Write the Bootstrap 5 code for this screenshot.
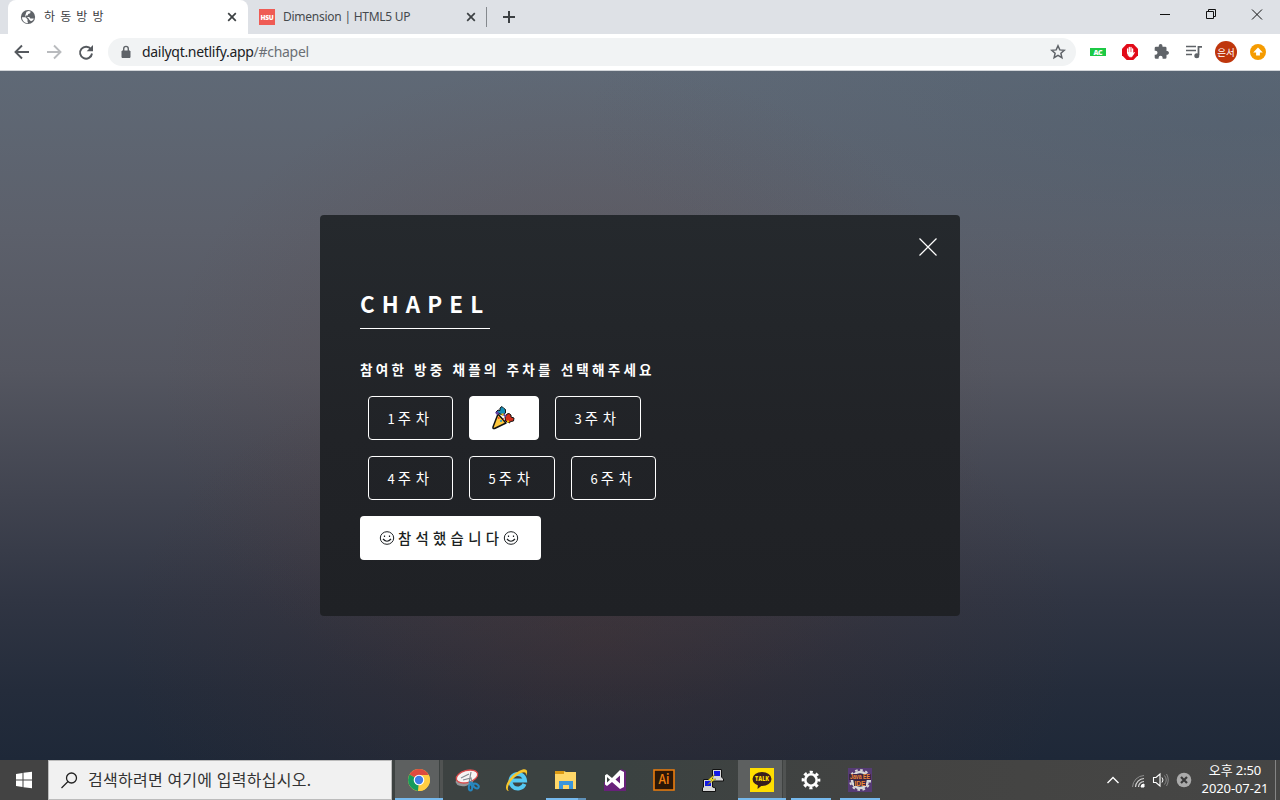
<!DOCTYPE html>
<html lang="ko">
<head>
<meta charset="utf-8">
<meta name="viewport" content="width=device-width, initial-scale=1">
<title>하동방방</title>
<link href="https://cdn.jsdelivr.net/npm/bootstrap@5.3.0/dist/css/bootstrap.min.css" rel="stylesheet">
<style>
body{width:1280px;height:800px;overflow:hidden;font-family:"Noto Sans","Noto Sans CJK KR",sans-serif;font-size:12px;line-height:1.5}
svg{display:block;flex:none}
.tabstrip{height:34px;background:#dee1e6;padding-left:8px}
.tab-on{width:240px;height:34px;background:#fff;border-radius:8px 8px 0 0;padding-left:12px;color:#3c4043}
.tab-off{width:238px;height:34px;padding-left:11px;color:#45494d;letter-spacing:-.25px}
.tab-name{line-height:34px;white-space:pre}
.tab-on .tab-name{letter-spacing:1px}
.tab-name,.url{margin-left:8px}
.tab-x{margin-right:11px}
.toolbar{height:37px;background:#fff;border-bottom:1px solid #d2d5d9;padding-left:12px}
.omni{width:968px;height:28px;border-radius:14px;background:#f1f3f4;margin-left:12px;padding-left:12px;padding-right:10px}
.url{font-size:14px;line-height:20px;padding-bottom:1px;color:#202124;letter-spacing:-.3px}
.url span{color:#6b6f74}
.stage{height:689px;background:
 radial-gradient(ellipse 480px 300px at 600px 570px,rgba(80,50,45,.32),rgba(80,50,45,0)),
 radial-gradient(ellipse 420px 330px at 580px 320px,rgba(95,65,60,.30),rgba(95,65,60,0)),
 radial-gradient(ellipse 650px 210px at 1230px 50px,rgba(70,90,108,.34),rgba(70,90,108,0)),
 linear-gradient(180deg,#5f6976 0,#5c606b 160px,#545660 300px,#40434f 430px,#303543 530px,#242c3b 620px,#1e2838 689px);
 padding-top:144px}
.panel{width:640px;height:401px;border-radius:4px;background:linear-gradient(180deg,#25292d,#212327 55%,#1f2125);color:#fff;padding:72px 40px 0;font-family:"Noto Sans CJK KR",sans-serif}
.panel .close-x{position:absolute;right:23px;top:23px}
.title{width:130px;height:42px;border-bottom:1px solid #fff;font-size:22.4px;font-weight:600;letter-spacing:7.1px;line-height:32px;white-space:nowrap;margin-bottom:30px}
.ask{font-size:13.6px;font-weight:700;letter-spacing:3.19px;line-height:21px;height:37px;margin:0;white-space:nowrap}
.wk{height:44px;width:85px;padding:0 0 0 18.5px;border:1px solid #fff;border-radius:4px;color:#fff;font-size:14.4px;font-weight:400;letter-spacing:4.9px;line-height:38px;text-align:left;white-space:nowrap;background:none}
.wk b{font-weight:400;font-size:13px;letter-spacing:3px}
.wk.w86{width:86px}
.wk.sel{width:70px;background:#fff;padding-left:21px}
.send{height:44px;width:181px;padding:0 0 0 19px;border:0;border-radius:4px;background:#fff;color:#1b1f22;font-family:inherit;font-size:14.4px;font-weight:500;letter-spacing:4.3px;line-height:42px;white-space:nowrap}
.send span{margin-left:3px;padding-bottom:1px}
.taskbar{height:40px;background:linear-gradient(90deg,#434343 0,#434343 48px,#3d4241 400px,#3a4241 600px,#434342 900px,#464645 1280px)}
.search{width:344px;height:40px;background:#f1f1f1;border:1px solid #bcbcbc;padding-left:12px;margin-right:2px;color:#333;font-size:16px;letter-spacing:.27px}
.search span{margin-left:10px;line-height:36px}
.app{width:49px;height:40px;position:relative;padding-bottom:1px}
.app.open{background:linear-gradient(#76b9ed,#76b9ed) 5px 38px/40px 2px no-repeat}
.app.multi{background:linear-gradient(#5f91b8,#5f91b8) 37px 38px/8px 2px no-repeat,linear-gradient(#76b9ed,#76b9ed) 5px 38px/32px 2px no-repeat}
.app.live{background:linear-gradient(#76b9ed,#76b9ed) 1px 38px/48px 2px no-repeat,linear-gradient(#5d6060,#5d6060) 1px 0/44px 38px no-repeat,linear-gradient(#505352,#505352) 46px 0/3px 38px no-repeat}
.clock{width:74px;color:#fff;font-size:13px;line-height:18px;padding-bottom:2px;letter-spacing:-.1px;text-align:center;white-space:nowrap}
</style>
</head>
<body>
<header>
 <div class="tabstrip d-flex">
  <div class="tab-on d-flex align-items-center">
   <svg width="16" height="16" viewBox="0 0 16 16"><circle cx="8" cy="8" r="7.1" fill="#5f6368"/><path d="M2 8.2h3.500l2 2v2.400l.6 1.600C4.500 14 2 11.500 2 8.200zM6.500 2.700l2.100-.8 2 .6-.4 1.700-2 .8-.5 1.600H5.800v1.200l3.500.2 1 1.400 3.500.2-.6 1.500-2.200 1.200-1.700-1.500-1.300-2-3-1.500z" fill="#fff"/></svg>
   <span class="tab-name">하 동 방 방</span>
   <svg class="ms-auto tab-x" width="10" height="10" viewBox="0 0 10 10"><path d="M1.200 1.200l7.600 7.600M8.800 1.200l-7.600 7.600" stroke="#3c4043" stroke-width="1.700"/></svg>
  </div>
  <div class="tab-off d-flex align-items-center">
   <svg width="16" height="16"><path fill="#ef5b54" d="M0 0h16v16H0z"/><text x="1.500" y="10.500" fill="#fff" font-family="Open Sans,sans-serif" font-size="6.500" font-weight="800" textLength="13" lengthAdjust="spacingAndGlyphs">HSU</text></svg>
   <span class="tab-name">Dimension | HTML5 UP</span>
   <svg class="ms-auto" style="margin-right:10px" width="10" height="10" viewBox="0 0 10 10"><path d="M1.200 1.200l7.600 7.600M8.800 1.200l-7.600 7.600" stroke="#3c4043" stroke-width="1.700"/></svg>
  </div>
  <svg width="34" height="34"><path d="M.5 7v20" stroke="#85898e"/><path d="M17 17h12M23 11v12" stroke="#3c4043" stroke-width="2"/></svg>
  <svg class="ms-auto" width="130" height="34" fill="none" stroke="#111"><path d="M10 14.500h10M56.500 11.500h7v7h-7zM58.500 11.500v-2h7v7h-2M102 9.500l10 10M112 9.500l-10 10"/></svg>
 </div>
 <div class="toolbar d-flex align-items-center">
  <svg width="84" height="36" fill="none" stroke="#55595e" stroke-width="1.900"><path d="M17 18H4M10 11.500L3.500 18l6.500 6.500"/><path stroke="#b9bbbe" d="M35 18h13M42 11.500l6.500 6.500-6.500 6.500"/><path d="M79 15.300a6 6 0 1 0 1 4.200"/><path d="M81 11v6.300h-6.300z" fill="#55595e" stroke="none"/></svg>
  <div class="omni d-flex align-items-center">
   <svg width="14" height="16"><path d="M2 7h8v6.500H2z" fill="#5f6368" stroke="#5f6368" stroke-linejoin="round"/><path d="M3.700 7V4.700a2.300 2.300 0 0 1 4.600 0V7" fill="none" stroke="#5f6368" stroke-width="1.400"/></svg>
   <div class="url">dailyqt.netlify.app<span>/#chapel</span></div>
   <svg class="ms-auto" width="16" height="16"><path d="M8 1.800l1.800 4.100 4.500.4-3.400 3 1 4.400L8 11.400l-3.900 2.300 1-4.400-3.400-3 4.500-.4z" fill="none" stroke="#5f6368" stroke-width="1.500"/></svg>
  </div>
  <svg width="204" height="36" viewBox="1076 34 204 36"><path fill="#1cc945" d="M1090 48h16v8h-16z"/><text x="1098" y="54.500" font-size="7" font-family="Open Sans,sans-serif" font-weight="800" fill="#fff" text-anchor="middle" textLength="9">AC</text>
   <path d="M1126.700 44h6.600l4.700 4.700v6.600l-4.700 4.700h-6.600l-4.700-4.700v-6.600z" fill="#e20a18"/><path d="M1127.500 52.500l.8 3 1.200 1.300h2.300l2.700-4.300-1.200.5-1 1v-1.500z" fill="#fff" stroke="#fff" stroke-width=".8" stroke-linejoin="round"/><path d="M1127.600 53v-4M1129.300 53v-5.500M1131 53v-5.500M1132.600 54v-5" stroke="#fff" stroke-width="1.300" stroke-linecap="round"/>
   <path d="M1167.500 51h-1v-3q0-1.300-1.300-1.300h-2.700v-.7a1.900 1.900 0 0 0-3.800 0v.7h-2.700q-1.300 0-1.300 1.300v2.700h.8a2 2 0 0 1 0 4h-.8v2.700q0 1.300 1.300 1.300h2.600v-.9a2 2 0 0 1 4 0v.9h2.600q1.300 0 1.300-1.300v-2.700h1a1.900 1.900 0 0 0 0-3.700z" fill="#5f6368"/>
   <path d="M1186 46.500h10M1186 50.500h10M1186 54.500h6" stroke="#5f6368" stroke-width="1.700"/><path d="M1202 46.800h-3.500v8.200" stroke="#5f6368" stroke-width="1.800" fill="none"/><circle cx="1196.800" cy="55.700" r="2.500" fill="#5f6368"/>
   <circle cx="1226" cy="52" r="11" fill="#bf360c"/><text x="1226" y="55.500" font-family="Noto Sans CJK KR,sans-serif" font-size="9.500" fill="#fff" text-anchor="middle">은서</text>
   <circle cx="1258" cy="52" r="8" fill="#f59b00"/><path d="M1258 47.500l4.800 5h-2.900v3h-3.800v-3h-2.900z" fill="#fff"/></svg>
 </div>
</header>
<main class="stage">
 <article class="panel mx-auto position-relative">
  <svg class="close-x" width="18" height="18"><path d="M.5.5l17 17M17.500.5l-17 17" stroke="#fff" stroke-width="1.200"/></svg>
  <h2 class="title">CHAPEL</h2>
  <h4 class="ask">참여한 방중 채플의 주차를 선택해주세요</h4>
  <div class="d-flex gap-3 ms-2 mb-3"><button class="btn wk"><b>1</b>주차</button><button class="btn wk sel" aria-label="2주차"><svg width="24" height="26" viewBox="0 0 24 26"><path d="M7 9L2 22q-.4 2 1.600 1.500L15 18z" fill="#ffc83d" stroke="#111" stroke-width="1.500" stroke-linejoin="round"/><path d="M5 7l2-2 2 .5V3l2-1.500 2 2 1.500 1V8L12 10l-3-1z" fill="#168fb8" stroke="#111"/><path d="M4 7.500l3-1.500 1 3-2 1z" fill="#6340a0"/><path d="M14 12l2-3 2-.5 2 1.500v2l3 1-.5 3-3 .5-1 1.500-4-2z" fill="#d3301c" stroke="#111"/><path d="M12 9l3 2.500" stroke="#6340a0" stroke-width="2"/><path d="M10.500 9.500h2M16 16.500h2" stroke="#f4c400" stroke-width="2"/><path d="M9 16h2" stroke="#1598d5" stroke-width="1.600"/><path d="M7 13h1.500M12 14h1" stroke="#e4311b" stroke-width="1.500"/></svg></button><button class="btn wk w86"><b>3</b>주차</button></div>
  <div class="d-flex gap-3 ms-2 mb-3"><button class="btn wk"><b>4</b>주차</button><button class="btn wk w86"><b>5</b>주차</button><button class="btn wk"><b>6</b>주차</button></div>
  <button class="send d-flex align-items-center"><svg width="16" height="16" fill="none" stroke="#1b1f22"><ellipse cx="8" cy="8" rx="6.700" ry="6.300"/><path d="M4 9q4 4.500 8 0M5.500 5.500v1.500M10.500 5.500v1.500" stroke-width="1.200"/></svg><span>참석했습니다</span><svg width="16" height="16" fill="none" stroke="#1b1f22"><ellipse cx="8" cy="8" rx="6.700" ry="6.300"/><path d="M4 9q4 4.500 8 0M5.500 5.500v1.500M10.500 5.500v1.500" stroke-width="1.200"/></svg></button>
 </article>
</main>
<footer class="taskbar d-flex align-items-center">
 <svg width="48" height="40"><path d="M16 14l6.500-1v6.500H16zM23.500 12.800L32 11.700v7.800h-8.500zM16 20.500h6.500v6.600l-6.500-1zM23.500 20.500H32v7.800l-8.500-1.100z" fill="#fff"/></svg>
 <div class="search d-flex align-items-center"><svg width="17" height="17" fill="none" stroke="#222" stroke-width="1.300"><circle cx="10.500" cy="6" r="5"/><path d="M7 9.500L.5 16"/></svg><span>검색하려면 여기에 입력하십시오.</span></div>
 <div class="app live d-flex align-items-center justify-content-center"><svg width="24" height="24"><circle cx="12" cy="12" r="11" fill="#ffce44"/><path d="M12 12L2.500 6.500a11 11 0 0 1 19 0z" fill="#de4b3f"/><path d="M12 12L2.500 6.500a11 11 0 0 0 8.500 16.400z" fill="#159b5d"/><path d="M12 7h9.800q2.400 5.500-.5 10.500A11 11 0 0 1 11 23l5-8.500z" fill="#ffce44"/><circle cx="12" cy="12" r="5.300" fill="#fff"/><circle cx="12" cy="12" r="4.200" fill="#3f7de8"/></svg></div>
 <div class="app d-flex align-items-center justify-content-center"><svg width="26" height="24"><ellipse cx="10" cy="12" rx="9.500" ry="6" fill="#92979a" transform="rotate(-15 10 12)"/><ellipse cx="12" cy="8.500" rx="11" ry="6" fill="#f7f4f4" stroke="#dc4c4c" stroke-width="1.300" transform="rotate(-15 12 8.500)"/><path d="M6 10l8-4M8 12l8-2 1 5M16 4l-2 11" fill="none" stroke="#858b91" stroke-width="1.200"/><path d="M14 14l5 2" stroke="#2687bf" stroke-width="2"/><ellipse cx="15.500" cy="19.500" rx="1.700" ry="3" fill="none" stroke="#2687bf" stroke-width="2"/><ellipse cx="21" cy="18" rx="3" ry="2" fill="none" stroke="#2687bf" stroke-width="2" transform="rotate(35 21 18)"/></svg></div>
 <div class="app d-flex align-items-center justify-content-center"><svg width="24" height="24"><path d="M19.500 16a7.300 7.300 0 1 1 .5-3.500H7" fill="none" stroke="#55c9f3" stroke-width="4"/><path d="M4 23C-3 22 3 9 14 3c7-4 10-1 7 5 .5-5-3-4-7-2C7 10 0 20 4 23z" fill="#f8c62c"/></svg></div>
 <div class="app multi d-flex align-items-center justify-content-center"><svg width="24" height="22"><path d="M1 2h9l2 1h10v17H1z" fill="#ffd768"/><path d="M1 2h9v3H1z" fill="#dc9a13"/><path d="M5 12h14v8h-4v-4H9v4H5z" fill="#3b96dc"/></svg></div>
 <div class="app d-flex align-items-center justify-content-center"><svg width="24" height="24"><path d="M1 14h11l6-13 5 2v20H1z" fill="#68217a"/><path d="M17 2l4 2v15l-4 2-8-7-5 4L2 16.500V7.300L4 6l5 4zM17 7.500L12.500 11.500l4.500 4zM4 9v5.500l3-2.800z" fill="#fff" fill-rule="evenodd"/></svg></div>
 <div class="app d-flex align-items-center justify-content-center"><svg width="22" height="22"><path d="M1 1h20v20H1z" fill="#2b1707" stroke="#ed7d0d" stroke-width="1.600"/><text x="5.500" y="15" font-family="Noto Sans CJK KR,sans-serif" font-size="13" font-weight="500" fill="#f28211" textLength="11" lengthAdjust="spacingAndGlyphs">Ai</text></svg></div>
 <div class="app d-flex align-items-center justify-content-center"><svg width="24" height="24"><path d="M11.500 1.500h9V9l2 2v2h-11zM2.500 11.500h9V19l3 1v3.500h-13V20l1-1z" fill="#d7d7d7" stroke="#111"/><path d="M13 3h6v5h-6zM4 13h6v5H4z" fill="#1118e8"/><path d="M14 6l-7 6h4l-5 5 9-6h-4z" fill="#ffe82b" stroke="#665f00" stroke-width=".4"/></svg></div>
 <div class="app live d-flex align-items-center justify-content-center"><svg width="24" height="24"><path d="M0 0h24v24H0z" fill="#ffde00"/><ellipse cx="12" cy="11" rx="9.500" ry="7" fill="#381e1e"/><path d="M8 16l-.5 5 5-4z" fill="#381e1e"/><text x="5" y="13.200" font-family="Open Sans,sans-serif" font-size="6" font-weight="800" fill="#ffde00" textLength="14" lengthAdjust="spacingAndGlyphs">TALK</text></svg></div>
 <div class="app open d-flex align-items-center justify-content-center"><svg width="20" height="20" fill="none" stroke="#fff"><circle cx="10" cy="10" r="5.700" stroke-width="2.600"/><circle cx="10" cy="10" r="8" stroke-width="2.700" stroke-dasharray="3.142 3.142" stroke-dashoffset="1.570"/></svg></div>
 <div class="app open d-flex align-items-center justify-content-center"><svg width="24" height="24"><path d="M0 0h24v24H0z" fill="#563b75"/><circle cx="12" cy="12" r="8" fill="#2a244d" stroke="#d8d8d8" stroke-width="2.500"/><circle cx="12" cy="12" r="10" fill="none" stroke="#d8d8d8" stroke-width="2" stroke-dasharray="2.600 2.630"/><path d="M1 6h22v6H1zM6 12h12v6H6z" fill="#3a2444"/><g font-family="Liberation Sans,sans-serif" font-size="6.500" font-weight="700" fill="#f08a36"><text x="2" y="11" textLength="20" lengthAdjust="spacingAndGlyphs">Java EE</text><text x="6.500" y="17.600" textLength="11" lengthAdjust="spacingAndGlyphs">IDE</text></g></svg></div>
 <svg class="ms-auto" width="96" height="40" viewBox="1102 760 96 40" fill="none" stroke="#fff"><path d="M1107.500 783l5.500-5.500 5.500 5.500" stroke-width="1.400"/><path d="M1132.500 787a12 12 0 0 1 11.500-11.500" stroke="#8c8c8c"/><path d="M1135.500 787a9 9 0 0 1 8.500-8.500M1138.500 787a6 6 0 0 1 5.500-5.500" stroke="#d5d5d5" stroke-width="1.200"/><path d="M1141 787a3 3 0 0 1 3-3v3z" fill="#fff"/><path d="M1153.500 777.500h2.500l4-3.500v12l-4-3.500h-2.500z" stroke-width="1.100"/><path d="M1162 777.500q2 2.500 0 5"/><path d="M1164.500 775.500q3.500 4.500 0 9M1166.500 774q3.500 6 0 12" stroke="#888"/><circle cx="1184" cy="780" r="7.300" fill="#aaa" stroke="none"/><path d="M1181 777l6 6M1187 777l-6 6" stroke="#3a3a3a" stroke-width="2.200"/></svg>
 <div class="clock"><div>오후 2:50</div><div>2020-07-21</div></div>
 <svg width="8" height="40"><path d="M3.500 0v40" stroke="#858585"/></svg>
</footer>
<script src="https://cdn.jsdelivr.net/npm/bootstrap@5.3.0/dist/js/bootstrap.bundle.min.js"></script>
</body>
</html>
